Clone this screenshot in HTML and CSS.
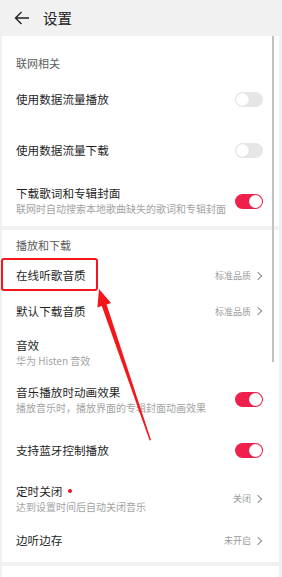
FILE: index.html
```html
<!doctype html>
<html lang="zh-CN">
<head>
	<meta charset="UTF-8">
	<title>设置</title>
	<link rel="stylesheet" href="styles.css">
</head>
<body>
	<header class="topbar">
		<svg class="back" width="16" height="14" viewBox="0 0 16 14">
			<path d="M15 7H1.5M7.5 1L1.5 7l6 6" fill="none" stroke="#222" stroke-width="1.4"/>
		</svg>
		<h1>设置</h1>
	</header>

	<section class="card">
		<div class="group-title first">联网相关</div>
		<div class="row h51">
			<div class="text"><div class="title">使用数据流量播放</div></div>
			<span class="switch"></span>
		</div>
		<div class="row h51">
			<div class="text"><div class="title">使用数据流量下载</div></div>
			<span class="switch"></span>
		</div>
		<div class="row h50">
			<div class="text">
				<div class="title">下载歌词和专辑封面</div>
				<div class="sub">联网时自动搜索本地歌曲缺失的歌词和专辑封面</div>
			</div>
			<span class="switch on"></span>
		</div>
	</section>

	<section class="card">
		<div class="group-title">播放和下载</div>
		<div class="row h35">
			<div class="text"><div class="title">在线听歌音质</div></div>
			<span class="value">标准品质<i class="chev"></i></span>
		</div>
		<div class="row h36">
			<div class="text"><div class="title">默认下载音质</div></div>
			<span class="value">标准品质<i class="chev"></i></span>
		</div>
		<div class="row h48">
			<div class="text">
				<div class="title">音效</div>
				<div class="sub">华为 Histen 音效</div>
			</div>
		</div>
		<div class="row h45">
			<div class="text">
				<div class="title">音乐播放时动画效果</div>
				<div class="sub">播放音乐时，播放界面的专辑封面动画效果</div>
			</div>
			<span class="switch on"></span>
		</div>
		<div class="row h56">
			<div class="text"><div class="title">支持蓝牙控制播放</div></div>
			<span class="switch on"></span>
		</div>
		<div class="row h41">
			<div class="text">
				<div class="title">定时关闭<span class="dot"></span></div>
				<div class="sub">达到设置时间后自动关闭音乐</div>
			</div>
			<span class="value">关闭<i class="chev"></i></span>
		</div>
		<div class="row h43">
			<div class="text"><div class="title">边听边存</div></div>
			<span class="value">未开启<i class="chev"></i></span>
		</div>
	</section>

	<section class="card tail"></section>

	<div class="scrollbar"></div>
	<div class="mark-box"></div>
	<svg class="mark-arrow" width="282" height="577" viewBox="0 0 282 577">
		<polygon points="99,289 111,303 106.6,304.4 151,440 149.6,440.4 101.8,306 97.4,307.4" fill="#f4161b"/>
	</svg>
</body>
</html>
```

FILE: styles.css
```css
* {
	margin: 0;
	padding: 0;
	box-sizing: border-box;
}
body {
	position: relative;
	width: 282px;
	height: 577px;
	overflow: hidden;
	background-color: #f1f1f1;
	font-family: "Noto Sans CJK SC", "Noto Sans", sans-serif;
	color: #1f1f1f;
}
.topbar {
	height: 36px;
	display: flex;
	align-items: center;
	padding-left: 14px;
}
.topbar .back {
	display: block;
}
.topbar h1 {
	margin-left: 13px;
	font-size: 14.5px;
	font-weight: 400;
	line-height: 18px;
	color: #222;
}
.card {
	margin: 0 3px 4px 2px;
	background-color: #fff;
}
.card.tail {
	height: 20px;
	margin-top: 1px;
}
.group-title {
	height: 28px;
	padding: 8px 0 0 14px;
	font-size: 11px;
	line-height: 14px;
	color: #5c5c5c;
}
.group-title.first {
	height: 38px;
	padding-top: 20px;
}
.row {
	display: flex;
	align-items: center;
	justify-content: space-between;
	padding: 0 16px 0 14px;
}
.h35 { height: 35px; }
.h36 { height: 36px; }
.h41 { height: 41px; }
.h43 { height: 43px; }
.h45 { height: 45px; }
.h48 { height: 48px; }
.h50 { height: 50px; }
.h51 { height: 51px; }
.h56 { height: 56px; }
.title {
	font-size: 11.6px;
	line-height: 15px;
	color: #1f1f1f;
	display: flex;
	align-items: center;
}
.sub {
	font-size: 10px;
	line-height: 15px;
	color: #a3a3a3;
	white-space: nowrap;
}
.dot {
	width: 4px;
	height: 4px;
	margin-left: 6px;
	border-radius: 50%;
	background-color: #e8141b;
}
.switch {
	position: relative;
	flex: none;
	width: 28px;
	height: 15px;
	border-radius: 8px;
	background-color: #e6e6e6;
}
.switch::after {
	content: "";
	position: absolute;
	top: 1px;
	left: 1px;
	width: 13px;
	height: 13px;
	border-radius: 50%;
	background-color: #fff;
	box-shadow: 0 0 1px rgba(0, 0, 0, 0.15);
}
.switch.on {
	background-color: #f0204d;
}
.switch.on::after {
	left: 14px;
}
.value {
	display: flex;
	align-items: center;
	font-size: 9px;
	color: #9a9a9a;
}
.chev {
	width: 6px;
	height: 6px;
	margin-left: 4px;
	margin-right: 2px;
	border-top: 1px solid #8c8c8c;
	border-right: 1px solid #8c8c8c;
	transform: rotate(45deg);
}
.scrollbar {
	position: absolute;
	left: 272px;
	top: 36px;
	width: 2px;
	height: 326px;
	background-color: #c2c2c2;
}
.mark-box {
	position: absolute;
	left: 1px;
	top: 258px;
	width: 97px;
	height: 33px;
	border: 2px solid #f4161b;
	border-radius: 3px;
}
.mark-arrow {
	position: absolute;
	left: 0;
	top: 0;
	pointer-events: none;
}
```
